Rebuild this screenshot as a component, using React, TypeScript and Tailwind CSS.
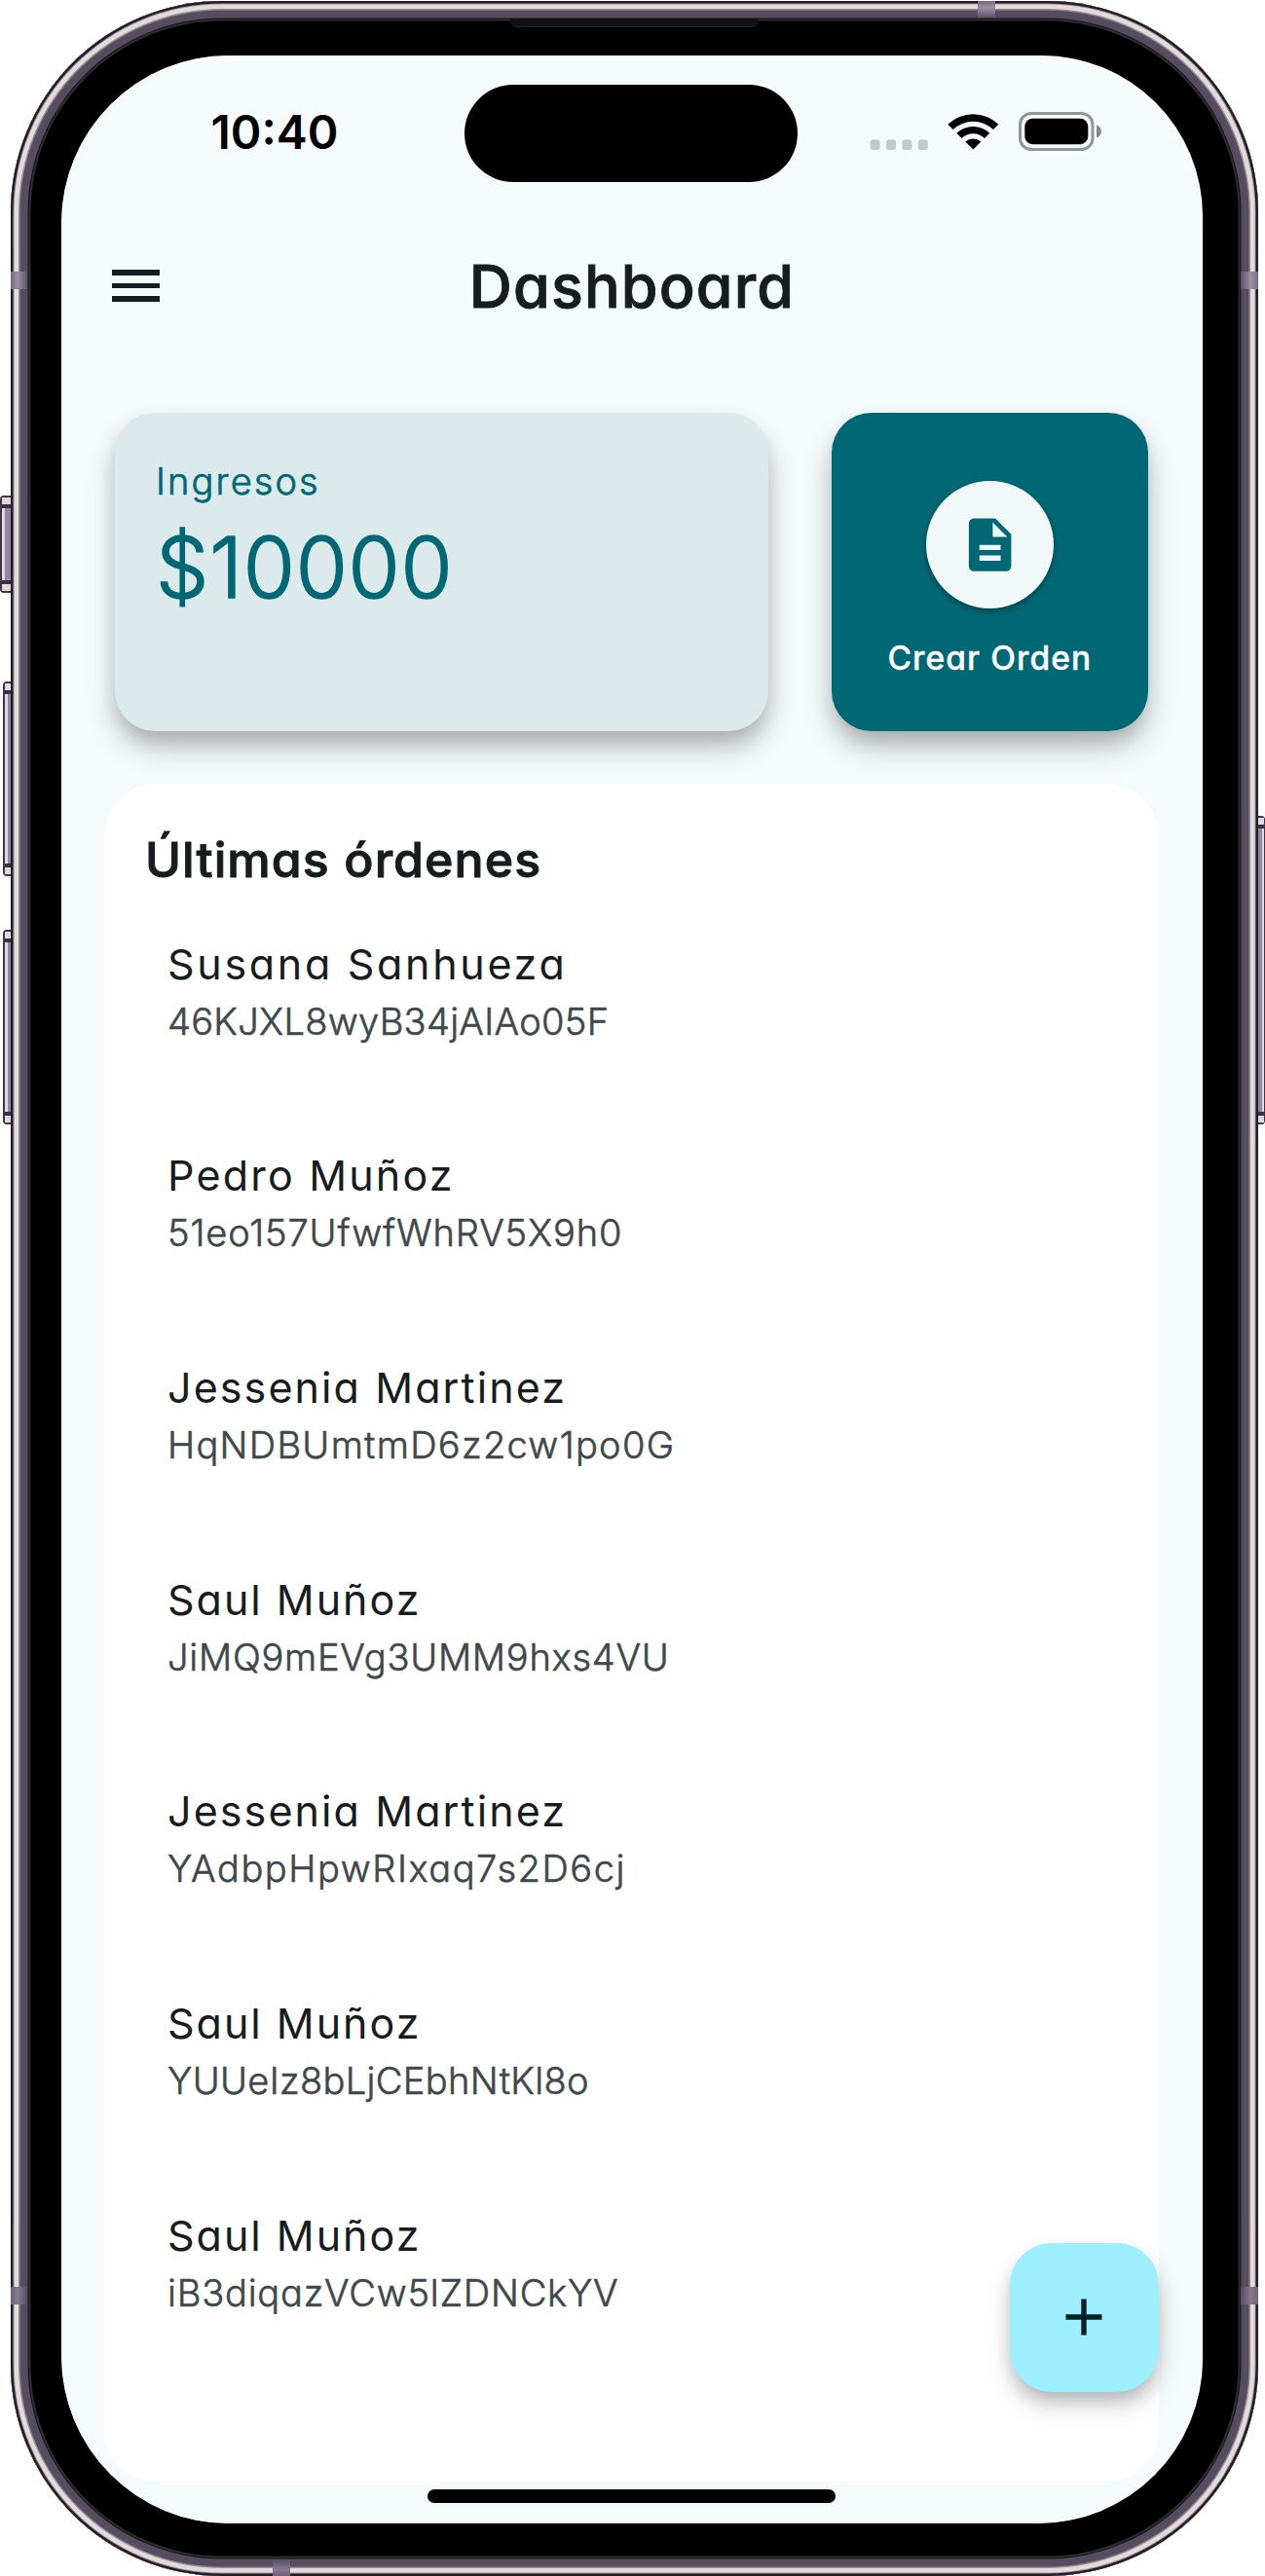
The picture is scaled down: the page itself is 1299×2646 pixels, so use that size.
import { MdDescription } from "react-icons/md";

type Order = { name: string; nameClass: string; id: string; idClass: string };

const orders: Order[] = [
  { name: "Susana Sanhueza", nameClass: "tracking-[2.7px]", id: "46KJXL8wyB34jAIAo05F", idClass: "tracking-[0.3px]" },
  { name: "Pedro Muñoz", nameClass: "tracking-[2.2px]", id: "51eo157UfwfWhRV5X9h0", idClass: "tracking-[0.87px]" },
  { name: "Jessenia Martinez", nameClass: "tracking-[2.1px]", id: "HqNDBUmtmD6z2cw1po0G", idClass: "tracking-[1.3px]" },
  { name: "Saul Muñoz", nameClass: "tracking-[2px]", id: "JiMQ9mEVg3UMM9hxs4VU", idClass: "tracking-[0.75px]" },
  { name: "Jessenia Martinez", nameClass: "tracking-[2.1px]", id: "YAdbpHpwRIxaq7s2D6cj", idClass: "tracking-[1.55px]" },
  { name: "Saul Muñoz", nameClass: "tracking-[2px]", id: "YUUeIz8bLjCEbhNtKl8o", idClass: "tracking-[0.35px]" },
  { name: "Saul Muñoz", nameClass: "tracking-[2px]", id: "iB3diqazVCw5lZDNCkYV", idClass: "tracking-[0.8px]" },
];

function StatusIcons() {
  return (
    <svg width="240" height="40" viewBox="0 0 240 40" fill="none">
      {[0, 16.4, 32.8, 49.2].map((x) => (
        <rect key={x} x={0.5 + x} y="28.5" width="10.2" height="10.4" rx="3" fill="#c4c8c8" />
      ))}
      <g transform="translate(106.3 39)" fill="#000">
        <path d="M-26 -26.3 A37.5 37.5 0 0 1 26 -26.3 L20.6 -21 A30 30 0 0 0 -20.6 -21 Z" />
        <path d="M-17 -17.3 A24.6 24.6 0 0 1 17 -17.3 L11.7 -12 A17 17 0 0 0 -11.7 -12 Z" />
        <path d="M-8 -8.4 A11.8 11.8 0 0 1 8 -8.4 L0 -0.4 Z" />
      </g>
      <rect x="154.5" y="1.5" width="74.5" height="37" rx="11.5" stroke="#929696" strokeWidth="3" />
      <rect x="159.3" y="6.8" width="65" height="26.4" rx="8" fill="#000" />
      <path d="M233 13.5 C239.5 15.5 239.5 24.5 233 26.5 Z" fill="#868a8a" />
    </svg>
  );
}

function StatusBar() {
  return (
    <div className="flex h-[100px] items-center">
      <div className="w-[414px] pb-[2px] pl-[153.5px] text-[48px] leading-[60px] font-semibold text-black">10:40</div>
      <div className="h-[100px] w-[342px] rounded-full bg-black" />
      <div className="ml-[74px] pb-[4px]">
        <StatusIcons />
      </div>
    </div>
  );
}

function Header() {
  return (
    <header className="grid h-[213px] grid-cols-[101px_1fr_101px] items-center">
      <button className="ml-[52px] flex w-[49px] flex-col gap-[8px]">
        <span className="h-[5.5px] w-full bg-[#171d1e]" />
        <span className="h-[5.5px] w-full bg-[#171d1e]" />
        <span className="h-[5.5px] w-full bg-[#171d1e]" />
      </button>
      <h1 className="text-center text-[61px] leading-[74px] font-medium tracking-[1.2px] text-[#171d1e] [-webkit-text-stroke:0.9px_#171d1e]">
        Dashboard
      </h1>
    </header>
  );
}

function Cards() {
  return (
    <div className="mt-[24px] ml-[54.5px] flex h-[326.5px] gap-[65.5px]">
      <section className="w-[671px] rounded-[41px] bg-[#ddeaeb] pt-[45px] pl-[42.5px] text-[#006874] shadow-[0_14px_22px_-3px_rgba(0,0,0,0.22),0_18px_34px_0_rgba(0,0,0,0.14)]">
        <div className="text-[38px] leading-[50px] font-light tracking-[2.1px] [-webkit-text-stroke:0.7px_#006874]">Ingresos</div>
        <div className="mt-[14px] text-[86px] leading-[100px] font-light tracking-[0.8px] [-webkit-text-stroke:1.6px_#006874]">$10000</div>
      </section>
      <section className="flex w-[324.7px] flex-col items-center rounded-[41px] bg-[#006874] pt-[70px] shadow-[0_14px_22px_-3px_rgba(0,0,0,0.22),0_18px_34px_0_rgba(0,0,0,0.14)]">
        <div className="flex size-[131px] items-center justify-center rounded-full bg-[#f2f7f8] shadow-[0_3px_6px_rgba(0,0,0,0.35)]">
          <MdDescription className="size-[65.3px] text-[#006874]" />
        </div>
        <div className="mt-[31px] text-[33.5px] leading-[40px] font-medium tracking-[1.1px] text-white [-webkit-text-stroke:0.4px_#fff]">Crear Orden</div>
      </section>
    </div>
  );
}

function OrdersPanel() {
  return (
    <section className="relative mt-[54px] ml-[43.5px] h-[1744px] w-[1083px] rounded-[54px] bg-white pt-[48px]">
      <h2 className="pl-[42.5px] text-[50px] leading-[60px] font-medium tracking-[1.1px] text-[#171d1e] [-webkit-text-stroke:1px_#171d1e]">
        Últimas órdenes
      </h2>
      <ul className="mt-[51px] pl-[65.5px]">
        {orders.map((o, i) => (
          <li key={i} className="h-[217.7px]">
            <div className={`text-[43px] leading-[52px] font-normal text-[#171d1e] ${o.nameClass}`}>{o.name}</div>
            <div className={`mt-[10px] text-[38px] leading-[46px] font-light text-[#3f484a] [-webkit-text-stroke:0.6px_#3f484a] ${o.idClass}`}>
              {o.id}
            </div>
          </li>
        ))}
      </ul>
      <button className="absolute right-0 bottom-[92px] flex size-[152.5px] items-center justify-center rounded-[43px] bg-[#9eeffd] shadow-[0_11px_18px_-3px_rgba(0,0,0,0.22),0_14px_30px_0_rgba(0,0,0,0.12)]">
        <svg width="38" height="38" viewBox="0 0 38 38" fill="#001f24">
          <path d="M16.3 0.5h5.4v15.8h15.8v5.4H21.7v15.8h-5.4V21.7H0.5v-5.4h15.8z" />
        </svg>
      </button>
    </section>
  );
}

function SideButton({ className }: { className: string }) {
  return (
    <div className={`absolute border-[#3d3446] bg-[#9087a1] ${className}`}>
      <div className="h-full w-full border-y-[7px] border-[#e0dadf]">
        <div className="h-full w-full border-y-[4px] border-[#3a3145]" />
      </div>
    </div>
  );
}

const leftButton = "rounded-l-[4px] border-y-[2px] border-l-[2px] shadow-[inset_3px_0_0_#e0dadf]";

export default function App() {
  return (
    <div
      className="relative h-[2646px] w-[1299px] overflow-hidden bg-white pt-px pl-[10.5px]"
      style={{ fontFamily: 'Inter, "Open Sans", sans-serif', fontFeatureSettings: '"cv11"' }}
    >
      <SideButton className={`${leftButton} top-[509px] left-0 h-[100px] w-[12px]`} />
      <SideButton className={`${leftButton} top-[700px] left-[3px] h-[200px] w-[9px]`} />
      <SideButton className={`${leftButton} top-[955px] left-[3px] h-[200px] w-[9px]`} />
      <SideButton className="top-[838px] right-0 h-[317px] w-[9px] rounded-r-[4px] border-y-[2px] border-r-[1px] shadow-[inset_-2px_0_0_#e0dadf]" />

      <div className="relative h-[2645px] w-[1281px] rounded-[217px] bg-black pt-[56px] pl-[52.5px] shadow-[inset_0_0_0_2.5px_#231c2b,inset_0_0_0_3.5px_#a1938f,inset_0_0_0_8px_#e0dcdd,inset_0_0_0_9.5px_#9a8b8c,inset_0_0_0_17.5px_#564c60,inset_0_0_0_18.5px_#17151b,inset_0_0_0_20.5px_#2d2d2d]">
        <div className="absolute top-[278px] left-0 h-[18px] w-[17.5px] bg-[linear-gradient(to_right,#74677f,#9c8fa6_40%,#5f5369)]" />
        <div className="absolute top-[278px] right-0 h-[18px] w-[17.5px] bg-[linear-gradient(to_left,#74677f,#9c8fa6_40%,#5f5369)]" />
        <div className="absolute top-[2348px] left-0 h-[18px] w-[17.5px] bg-[linear-gradient(to_right,#6d6178,#85788f_40%,#5a4f64)]" />
        <div className="absolute top-[2348px] right-0 h-[18px] w-[17.5px] bg-[linear-gradient(to_left,#6d6178,#85788f_40%,#5a4f64)]" />
        <div className="absolute top-0 left-[993.5px] h-[17px] w-[18px] bg-[linear-gradient(to_bottom,#74677f,#9c8fa6_40%,#5f5369)]" />
        <div className="absolute bottom-0 left-[269.5px] h-[17px] w-[18px] bg-[linear-gradient(to_top,#6d6178,#85788f_40%,#5a4f64)]" />
        <div className="absolute top-[18px] left-[513px] h-[9px] w-[255px] rounded-b-[8px] border-b border-[#2b2b2b] bg-[#121212]" />

        <div className="h-[2535px] w-[1172px] overflow-hidden rounded-l-[172px] rounded-tr-[165px] rounded-br-[169px] bg-white">
          <main className="h-[2535px] w-[1172px] overflow-hidden rounded-l-[172px] rounded-r-[173px] bg-[#f5fafb] pt-[30px]">
            <StatusBar />
            <Header />
            <Cards />
            <OrdersPanel />
            <div className="mt-[8.5px] ml-[375.5px] h-[14px] w-[419px] rounded-full bg-black" />
          </main>
        </div>
      </div>
    </div>
  );
}
